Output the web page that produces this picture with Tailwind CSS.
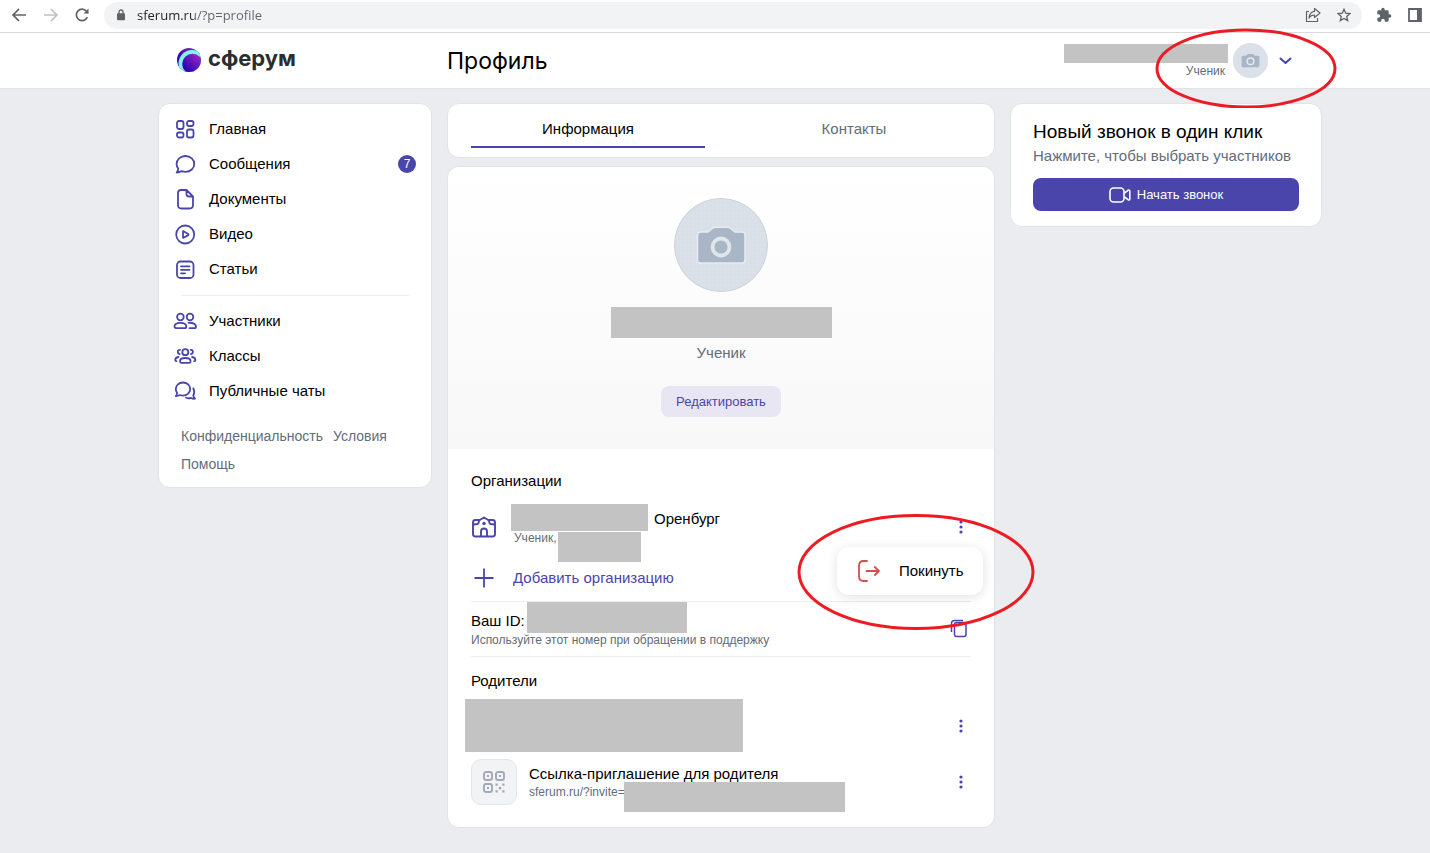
<!DOCTYPE html>
<html lang="ru">
<head>
<meta charset="utf-8">
<meta name="viewport" content="width=device-width, initial-scale=1">
<title>Профиль — Сферум</title>
<script src="https://cdn.jsdelivr.net/npm/@tailwindcss/browser@4"></script>
</head>
<body class="min-h-screen bg-[#ebecf0] font-['Liberation_Sans',sans-serif] text-[15px] leading-5 text-black">

<!-- Browser toolbar -->
<div class="flex h-[33px] items-center border-b border-[#d8dadd] bg-white pl-[7px] pr-2 pb-[2px] text-[#5f6368]">
  <button aria-label="Назад" class="flex w-[24px] justify-center"><svg width="16" height="16" viewBox="0 0 16 16" fill="none" stroke="currentColor" stroke-width="1.7"><path d="M15 8H2.5M8 2L2 8l6 6"/></svg></button>
  <button aria-label="Вперёд" class="ml-2 flex w-[24px] justify-center text-[#bdc1c6]"><svg width="16" height="16" viewBox="0 0 16 16" fill="none" stroke="currentColor" stroke-width="1.7"><path d="M1 8h12.500M8 2l6 6-6 6"/></svg></button>
  <button aria-label="Обновить" class="ml-[7px] flex w-[24px] justify-center"><svg width="16" height="16" viewBox="0 0 16 16" fill="none" stroke="currentColor" stroke-width="1.7"><path d="M13.300 10.200A5.700 5.700 0 1 1 12.500 4.300L14 6"/><path d="M14.500 1.500v5h-5z" fill="currentColor" stroke="none"/></svg></button>
  <div class="ml-[10px] flex h-[27px] flex-1 items-center rounded-full bg-[#f1f3f4] pl-3 pr-2">
    <svg width="10" height="12" viewBox="0 0 10 12" fill="none"><rect x="1" y="4.200" width="8" height="7" rx="1" fill="#5f6368"/><path d="M3 5V3a2 2 0 0 1 4 0v2" stroke="#5f6368" stroke-width="1.300"/></svg>
    <input aria-label="Адресная строка" value="sferum.ru/?p=profile" class="ml-[11px] min-w-0 flex-1 bg-linear-to-r from-[#202124] from-[57px] to-[#5f6368] to-[57px] bg-clip-text font-['Open_Sans',sans-serif] text-[13px] text-transparent outline-none">
    <button aria-label="Поделиться"><svg width="16" height="16" viewBox="0 0 16 16" fill="none" stroke="#5f6368" stroke-width="1.200" stroke-linejoin="round"><path d="M4 4.500H1.500v10h11V11M9.500 1.500L15 6l-5.500 4.500V8C7 8 5.300 8.800 4 11c.3-3.800 2.200-6.300 5.500-6.700z"/></svg></button>
    <button aria-label="В закладки" class="ml-4 mr-[3px]"><svg width="14" height="14" viewBox="0 0 14 14" fill="none" stroke="#5f6368" stroke-width="1.300"><path d="M7 1.300l1.700 3.900 4.200.4-3.200 2.800 1 4.200L7 10.400l-3.700 2.200 1-4.200L1.100 5.600l4.200-.4z"/></svg></button>
  </div>
  <button aria-label="Расширения" class="ml-[14px]"><svg width="16" height="16" viewBox="0 0 24 24" fill="#5f6368"><path d="M20.500 11H19V7a2 2 0 0 0-2-2h-4V3.500a2.500 2.500 0 0 0-5 0V5H4a2 2 0 0 0-2 2v3.800h1.500a2.700 2.700 0 0 1 0 5.400H2V20a2 2 0 0 0 2 2h3.800v-1.500a2.700 2.700 0 0 1 5.400 0V22H17a2 2 0 0 0 2-2v-4h1.500a2.500 2.500 0 0 0 0-5z"/></svg></button>
  <button aria-label="Боковая панель" class="ml-4"><svg width="14" height="14" viewBox="0 0 14 14"><path d="M1 1h12v12H1z" fill="none" stroke="#5f6368" stroke-width="1.800"/><path d="M9 1h4v12H9z" fill="#5f6368"/></svg></button>
</div>

<!-- Site header -->
<header class="border-b border-[#e1e3e6] bg-white pl-[158px] pr-[108px]">
  <div class="grid h-[55px] grid-cols-[274px_minmax(0,1fr)_312px] gap-x-[15px]">
    <a href="#" class="flex items-center pb-[2px] pl-[19px]">
      <svg width="24" height="24" viewBox="0 0 24 24">
        <defs>
          <linearGradient id="ball" x1="0" y1="1" x2="1" y2="0"><stop offset=".15" stop-color="#2400b8"/><stop offset=".8" stop-color="#8d24bd"/></linearGradient>
          <linearGradient id="back" x1="0" y1="1" x2="1" y2="0"><stop offset=".3" stop-color="#3200b8"/><stop offset=".8" stop-color="#7b27b8"/></linearGradient>
          <clipPath id="round"><circle cx="12" cy="12" r="12"/></clipPath>
        </defs>
        <g clip-path="url(#round)"><rect width="24" height="24" fill="url(#back)"/><circle cx="15" cy="15.500" r="13.500" fill="#7df5e8"/><circle cx="15.500" cy="16" r="10.300" fill="url(#ball)"/></g>
      </svg>
      <span class="ml-[7px] pb-[3px] font-[Inter,sans-serif] text-[22px] leading-7 font-bold text-[#2c2d2e]">сферум</span>
    </a>
    <h1 class="flex items-center font-[Inter,sans-serif] text-[23px] leading-7">Профиль</h1>
    <div class="relative flex items-center justify-end pr-[30px]">
      <div class="flex flex-col items-end pt-px">
        <span class="h-[19px] w-[164px] bg-[#c3c3c3]"></span>
        <span class="mr-[3px] text-[12px] leading-4 text-[#626d7a]">Ученик</span>
      </div>
      <svg class="ml-[5px]" width="35" height="35" viewBox="0 0 94 94"><circle cx="47" cy="47" r="46.500" fill="#dae1e8" stroke="#cdd3d9"/><path d="M27 34h8l5-4.500h14l5 4.500h8q4 0 4 4v23q0 4-4 4H27q-4 0-4-4V38q0-4 4-4z" fill="#a8b6c6"/><circle cx="47" cy="49" r="9" fill="none" stroke="#e3e9ef" stroke-width="4"/></svg>
      <button aria-label="Меню профиля" class="ml-[11px] text-[#4a45aa]"><svg width="13" height="8" viewBox="0 0 13 8" fill="none" stroke="currentColor" stroke-width="2" stroke-linecap="round" stroke-linejoin="round"><path d="M1.500 1.500l5 4.500 5-4.500"/></svg></button>
      <svg class="pointer-events-none absolute top-[-5px] right-[-15px] z-10" width="182" height="80" viewBox="0 0 182 80" fill="none" stroke="#ed1c24" stroke-width="3"><ellipse cx="91" cy="40.500" rx="89" ry="38.500"/></svg>
    </div>
  </div>
</header>

<div class="grid grid-cols-[274px_minmax(0,1fr)_312px] items-start gap-x-[15px] pt-[14px] pr-[108px] pb-6 pl-[158px]">

  <!-- Navigation -->
  <nav class="rounded-xl border border-[#e1e3e6] bg-white pt-[7px] pb-[9px]">
    <ul class="text-black">
      <li><a href="#" class="flex h-[35px] items-center pl-[14px]"><svg class="text-[#4a45aa]" width="24" height="24" viewBox="0 0 24 24" fill="none" stroke="currentColor" stroke-width="1.800"><rect x="4" y="4" width="6.500" height="8" rx="2"/><rect x="14" y="4" width="6.500" height="5" rx="1.900"/><rect x="4" y="15.500" width="6.500" height="5" rx="1.900"/><rect x="14" y="12.500" width="6.500" height="8" rx="2"/></svg><span class="ml-3">Главная</span></a></li>
      <li><a href="#" class="flex h-[35px] items-center pl-[14px] pr-[15px]"><svg class="text-[#4a45aa]" width="24" height="24" viewBox="0 0 24 24" fill="none" stroke="currentColor" stroke-width="1.800" stroke-linejoin="round"><path d="M12.500 4c5 0 8.800 3.500 8.800 7.900s-3.800 7.900-8.800 7.900c-1.400 0-2.700-.2-3.900-.7-1.300.9-3 1.500-5 1.500 1.100-1.200 1.700-2.600 1.700-3.800-1-1.300-1.700-3-1.700-4.900C3.600 7.500 7.500 4 12.500 4z"/></svg><span class="ml-3 flex-1">Сообщения</span><span class="flex size-[18px] items-center justify-center rounded-full bg-[#4a45aa] text-[12px] leading-4 text-white">7</span></a></li>
      <li><a href="#" class="flex h-[35px] items-center pl-[14px]"><svg class="text-[#4a45aa]" width="24" height="24" viewBox="0 0 24 24" fill="none" stroke="currentColor" stroke-width="1.800" stroke-linejoin="round"><path d="M8 3h5.500L20 9.500V18q0 3.500-3.500 3.500H8.500Q5 21.500 5 18V6q0-3 3-3zM13.500 3v4q0 2.500 2.500 2.500h4"/></svg><span class="ml-3">Документы</span></a></li>
      <li><a href="#" class="flex h-[35px] items-center pl-[14px]"><svg class="text-[#4a45aa]" width="24" height="24" viewBox="0 0 24 24" fill="none" stroke="currentColor" stroke-width="1.800" stroke-linejoin="round"><circle cx="12.200" cy="12.500" r="9"/><path d="M10 9.500v6q0 .6.600.3l4.600-2.700q.6-.5 0-1l-4.600-2.800q-.6-.3-.6.200z"/></svg><span class="ml-3">Видео</span></a></li>
      <li><a href="#" class="flex h-[35px] items-center pl-[14px]"><svg class="text-[#4a45aa]" width="24" height="24" viewBox="0 0 24 24" fill="none" stroke="currentColor" stroke-width="1.800" stroke-linecap="round"><rect x="4" y="4.500" width="16.500" height="16.500" rx="3.500"/><path d="M8 9.300h8.500M8 12.800h8.500M8 16.300h4"/></svg><span class="ml-3">Статьи</span></a></li>
    </ul>
    <hr class="mt-[9px] mr-[22px] mb-[7px] ml-[22px] border-[#ebedf0]">
    <ul>
      <li><a href="#" class="flex h-[35px] items-center pl-[14px]"><svg class="text-[#4a45aa]" width="24" height="24" viewBox="0 0 24 24" fill="none" stroke="currentColor" stroke-width="1.800" stroke-linecap="round"><circle cx="7.400" cy="8" r="3.300"/><circle cx="17" cy="8" r="3.300"/><path d="M1.500 17.500c0-2.500 2.600-3.700 5.900-3.700s5.900 1.200 5.900 3.700c0 1.100-.6 1.700-1.500 1.700H3c-.9 0-1.500-.6-1.500-1.700zM15.500 13.800c4.500-.3 7.500 1.200 7.500 3.700 0 1.100-.6 1.700-1.500 1.700h-5"/></svg><span class="ml-3">Участники</span></a></li>
      <li><a href="#" class="flex h-[35px] items-center pl-[14px]"><svg class="text-[#4a45aa]" width="24" height="24" viewBox="0 0 24 24" fill="none" stroke="currentColor" stroke-width="1.800" stroke-linecap="round"><circle cx="12.300" cy="8.200" r="3"/><path d="M7 17.300c0-2.200 2.300-3.300 5.300-3.300s5.300 1.100 5.300 3.300c0 1-.6 1.600-1.500 1.600H8.500c-.9 0-1.500-.6-1.500-1.600zM7 5.800C4.400 5.500 4 9.500 6.600 10M17.700 5.800c2.600-.3 3 3.700.4 4.200M5.500 13c-2 .4-3.300 1.500-3.300 3 0 .7.500 1.200 1.200 1.200M19.100 13c2 .4 3.300 1.500 3.300 3 0 .7-.5 1.200-1.200 1.200"/></svg><span class="ml-3">Классы</span></a></li>
      <li><a href="#" class="flex h-[35px] items-center pl-[14px]"><svg class="text-[#4a45aa]" width="24" height="24" viewBox="0 0 24 24" fill="none" stroke="currentColor" stroke-width="1.800" stroke-linecap="round" stroke-linejoin="round"><path d="M10 3.500c4 0 7.200 2.900 7.200 6.500s-3.200 6.600-7.200 6.600c-1.100 0-2.100-.2-3-.6-1.200.7-2.500 1-4.200 1 .9-1 1.300-2 1.300-3A6.300 6.300 0 0 1 2.800 10C2.800 6.400 6 3.500 10 3.500zM20.300 9.300c1 1.900 1.400 4.700 0 7.200 0 1 .6 2 1.700 3.200-1.500.2-2.900-.1-4-.8-1.600.6-3.500.6-5-.3"/></svg><span class="ml-3">Публичные чаты</span></a></li>
    </ul>
    <div class="mt-[14px] flex flex-wrap gap-x-[10px] pr-4 pl-[22px] text-[14px] leading-7 text-[#626d7a]">
      <a href="#">Конфиденциальность</a>
      <a href="#">Условия</a>
      <a href="#">Помощь</a>
    </div>
  </nav>

  <!-- Profile -->
  <main class="flex flex-col gap-2">
    <div role="tablist" class="grid h-[55px] grid-cols-2 gap-8 rounded-xl border border-[#e1e3e6] bg-white px-[23px] pb-[9px]">
      <button role="tab" aria-selected="true" class="border-b-2 border-[#4a45aa] pt-[7px]">Информация</button>
      <button role="tab" aria-selected="false" class="border-b-2 border-transparent pt-[7px] text-[#626d7a]">Контакты</button>
    </div>

    <div class="rounded-xl border border-[#e1e3e6] bg-white pb-[22px]">
      <section class="flex flex-col items-center rounded-t-xl bg-linear-to-b from-white to-[#f8f8f8] pt-[31px] pb-8">
        <svg width="94" height="94" viewBox="0 0 94 94">
          <defs><pattern id="weave" width="4" height="4" patternUnits="userSpaceOnUse"><rect width="4" height="4" fill="#dae1e8"/><path d="M0 1h4M1 0v4" stroke="#d6dde4" stroke-width=".6"/></pattern></defs>
          <circle cx="47" cy="47" r="46.500" fill="url(#weave)" stroke="#cdd3d9"/>
          <path d="M27 34h7l5-4q1-.7 3-.7h11q2 0 3 .7l5 4h7q3 0 3 3v25q0 3-3 3H27q-3.500 0-3.500-3V37q0-3 3.500-3z" fill="#a8b6c6" stroke="#e6ecf1" stroke-width="1.500"/>
          <circle cx="47" cy="49" r="8.500" fill="none" stroke="#dfe6ec" stroke-width="3.800"/>
        </svg>
        <span class="mt-[15px] h-[31px] w-[221px] bg-[#c3c3c3]"></span>
        <p class="mt-[5px] text-[#626d7a]">Ученик</p>
        <button class="mt-[23px] h-[31px] rounded-lg bg-[#e9e6f3] px-[15px] text-[13px] text-[#4a45aa]">Редактировать</button>
      </section>

      <div class="px-[23px]">
        <section class="relative pt-[22px]">
          <h2>Организации</h2>
          <div class="mt-[13px] flex h-[58px] items-start">
            <svg class="mt-[10px] text-[#4a45aa]" width="26" height="26" viewBox="0 0 26 26" fill="none" stroke="currentColor" stroke-width="1.900" stroke-linejoin="round" stroke-linecap="round"><path d="M8 6H4.500Q2 6 2 8.500v11.500q0 2.500 2.500 2.500h17q2.500 0 2.500-2.500V8.500q0-2.500-2.500-2.500H18M2.500 10.500l4-.5q1.200-.5 1.300-2l.2-1.500L13 3.500l5 3 .2 1.500q.1 1.500 1.300 2l4 .5M10 22v-4.500q0-3 3-3t3 3V22"/><circle cx="13" cy="9.500" r=".8" fill="currentColor"/></svg>
            <div class="ml-[14px]">
              <div class="flex items-center"><span class="h-[27px] w-[137px] bg-[#c3c3c3]"></span><span class="ml-[6px] pt-[3px]">Оренбург</span></div>
              <div class="mt-px flex items-start pl-[3px] text-[12px] leading-3 text-[#626d7a]"><span>Ученик,</span><span class="ml-[2px] h-[30px] w-[83px] bg-[#c3c3c3]"></span></div>
            </div>
            <button aria-label="Действия с организацией" class="mt-[15px] mr-2 ml-auto text-[#4a45aa]"><svg width="4" height="16" viewBox="0 0 4 16" fill="currentColor"><circle cx="2" cy="3" r="1.600"/><circle cx="2" cy="8" r="1.600"/><circle cx="2" cy="13" r="1.600"/></svg></button>
          </div>
          <button class="mt-[5px] flex h-[22px] items-center text-[#4a45aa]"><svg class="ml-[3px]" width="20" height="20" viewBox="0 0 20 20" stroke="currentColor" stroke-width="1.800"><path d="M10 .5v19M.5 10h19"/></svg><span class="ml-[19px]">Добавить организацию</span></button>

          <!-- Context menu of the organisation row -->
          <div class="absolute top-[98px] right-[-12px] z-10 rounded-xl bg-white shadow-[0_2px_12px_rgba(0,0,0,0.12)]">
            <button class="flex h-[48px] w-[146px] items-center pl-5"><svg width="24" height="24" viewBox="0 0 24 24" fill="none" stroke="#d1504a" stroke-width="1.800" stroke-linecap="round" stroke-linejoin="round"><path d="M10 2H6.500Q2 2 2 6.500v11Q2 22 6.500 22H10M9.500 12H22M17.800 8l4.200 4-4.200 4"/></svg><span class="ml-[18px]">Покинуть</span></button>
          </div>
          <svg class="pointer-events-none absolute top-[65px] right-[-64px] z-20" width="238" height="117" viewBox="0 0 238 117" fill="none" stroke="#ed1c24" stroke-width="3"><ellipse cx="119" cy="58" rx="117" ry="56.500"/></svg>
        </section>

        <section class="mt-[12px] flex h-[56px] items-start justify-between border-y border-[#ebedf0]">
          <div>
            <div class="flex h-[31px] items-center"><h2 class="pt-[6px]">Ваш ID:</h2><span class="ml-[2px] h-[31px] w-[160px] bg-[#c3c3c3]"></span></div>
            <p class="text-[12px] leading-[14px] text-[#626d7a]">Используйте этот номер при обращении в поддержку</p>
          </div>
          <button aria-label="Скопировать ID" class="mt-[17px] mr-1 text-[#4a45aa]"><svg width="17" height="19" viewBox="0 0 17 19" fill="none" stroke="currentColor" stroke-width="1.500"><rect x="4.500" y="3.500" width="11.500" height="14" rx="2"/><path d="M1.500 13V4.500Q1.500 1.500 4.500 1.500H13"/></svg></button>
        </section>

        <section class="pt-[14px]">
          <h2>Родители</h2>
          <div class="mt-[8px] -ml-[6px] flex items-center justify-between pr-2">
            <span class="h-[53px] w-[278px] bg-[#c3c3c3]"></span>
            <button aria-label="Действия с родителем" class="text-[#4a45aa]"><svg width="4" height="16" viewBox="0 0 4 16" fill="currentColor"><circle cx="2" cy="3" r="1.600"/><circle cx="2" cy="8" r="1.600"/><circle cx="2" cy="13" r="1.600"/></svg></button>
          </div>
          <div class="mt-[7px] flex h-[46px] items-center pr-2">
            <span class="flex size-[46px] items-center justify-center rounded-[10px] border border-[#e4e6e9] bg-[#f2f3f5]"><svg width="22" height="22" viewBox="0 0 22 22" fill="none" stroke="#a3a8b8" stroke-width="1.900"><rect x="1" y="1" width="8" height="8" rx="2"/><rect x="13" y="1" width="8" height="8" rx="2"/><rect x="1" y="13" width="8" height="8" rx="2"/><path fill="#a3a8b8" stroke="none" d="M4 4h2v2H4zM16 4h2v2h-2zM4 16h2v2H4zM12.500 12.500h2.200v2.200h-2.200zM19.300 12.500h2.200v2.200h-2.200zM15.800 15.900h2.400v2.400h-2.400zM12.500 19.300h2.200v2.200h-2.200zM19.300 19.300h2.200v2.200h-2.200z"/></svg></span>
            <div class="ml-3 h-[42px]">
              <p class="pt-[3px]">Ссылка-приглашение для родителя</p>
              <div class="-mt-[2px] flex h-[20px] items-start text-[12px] leading-5 text-[#626d7a]"><a href="#">sferum.ru/?invite=</a><span class="-ml-px h-[30px] w-[221px] bg-[#c3c3c3]"></span></div>
            </div>
            <button aria-label="Действия со ссылкой" class="ml-auto text-[#4a45aa]"><svg width="4" height="16" viewBox="0 0 4 16" fill="currentColor"><circle cx="2" cy="3" r="1.600"/><circle cx="2" cy="8" r="1.600"/><circle cx="2" cy="13" r="1.600"/></svg></button>
          </div>
        </section>
      </div>
    </div>
  </main>

  <!-- Quick call -->
  <aside class="rounded-xl border border-[#e1e3e6] bg-white px-[22px] pt-[16px] pb-[15px]">
    <h2 class="text-[19px] leading-6">Новый звонок в один клик</h2>
    <p class="mt-[2px] text-[#626d7a]">Нажмите, чтобы выбрать участников</p>
    <button class="mt-[12px] flex h-[33px] w-full items-center justify-center gap-[6px] rounded-lg bg-[#4a45aa] text-[13px] text-white"><svg width="22" height="16" viewBox="0 0 22 16" fill="none" stroke="currentColor" stroke-width="1.600" stroke-linejoin="round"><rect x="1" y="1" width="14" height="14" rx="3.500"/><path d="M15.500 6l3.500-2.700q1.800-.8 1.800 1v7.400q0 1.800-1.800 1L15.500 10"/></svg>Начать звонок</button>
  </aside>
</div>
</body>
</html>
